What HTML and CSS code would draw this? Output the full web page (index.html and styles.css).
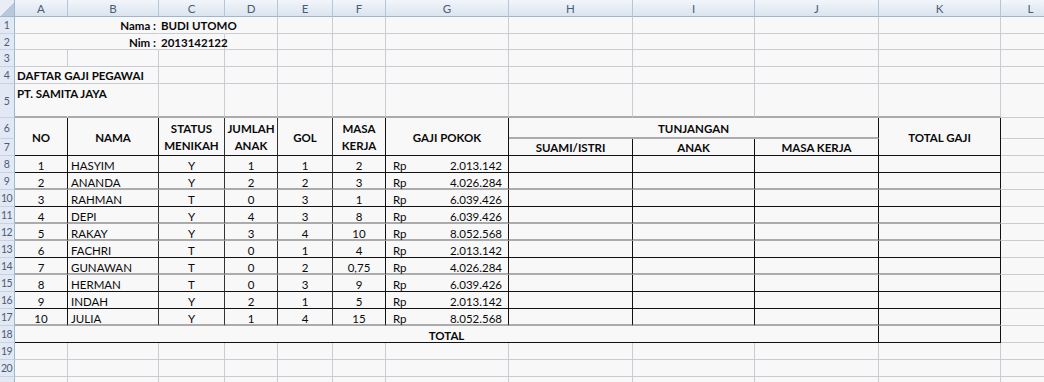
FILE: index.html
```html
<!DOCTYPE html>
<html>
<head>
<meta charset="utf-8">
<link rel="stylesheet" href="styles.css">
</head>
<body>
<div class="sheet">
  <div class="row">
    <div class="corner"></div>
    <div class="ch">A</div><div class="ch">B</div><div class="ch">C</div><div class="ch">D</div><div class="ch">E</div><div class="ch">F</div><div class="ch">G</div><div class="ch">H</div><div class="ch">I</div><div class="ch">J</div><div class="ch">K</div><div class="ch">L</div>
  </div>
  <div class="row">
    <div class="rh">1</div>
    <div class="c s2 nr r b">Nama :</div><div class="c nr b">BUDI UTOMO</div><div class="c"></div><div class="c"></div><div class="c"></div><div class="c"></div><div class="c"></div><div class="c"></div><div class="c"></div><div class="c"></div><div class="c"></div>
  </div>
  <div class="row">
    <div class="rh">2</div>
    <div class="c s2 nr r b">Nim :</div><div class="c b">2013142122</div><div class="c"></div><div class="c"></div><div class="c"></div><div class="c"></div><div class="c"></div><div class="c"></div><div class="c"></div><div class="c"></div><div class="c"></div>
  </div>
  <div class="row">
    <div class="rh">3</div>
    <div class="c"></div><div class="c"></div><div class="c"></div><div class="c"></div><div class="c"></div><div class="c"></div><div class="c"></div><div class="c"></div><div class="c"></div><div class="c"></div><div class="c"></div><div class="c"></div>
  </div>
  <div class="row">
    <div class="rh">4</div>
    <div class="c nr b">DAFTAR GAJI PEGAWAI</div><div class="c"></div><div class="c"></div><div class="c"></div><div class="c"></div><div class="c"></div><div class="c"></div><div class="c"></div><div class="c"></div><div class="c"></div><div class="c"></div><div class="c"></div>
  </div>
  <div class="row top">
    <div class="rh">5</div>
    <div class="c tb nr b up">PT. SAMITA JAYA</div><div class="c tb"></div><div class="c tb"></div><div class="c tb"></div><div class="c tb"></div><div class="c tb"></div><div class="c tb"></div><div class="c tb"></div><div class="c tb"></div><div class="c tb"></div><div class="c tb"></div><div class="c"></div>
  </div>
  <div class="row hd">
    <div class="rh">6</div>
    <div class="c t v2 ctr">NO</div>
    <div class="c t v2 ctr">NAMA</div>
    <div class="c t v2 ctr dk two">STATUS<br>MENIKAH</div>
    <div class="c t v2 ctr dk two">JUMLAH<br>ANAK</div>
    <div class="c t v2 ctr dk">GOL</div>
    <div class="c t v2 ctr two">MASA<br>KERJA</div>
    <div class="c t v2 ctr">GAJI POKOK</div>
    <div class="c t s3 ctr gb">TUNJANGAN</div>
    <div class="c t v2 ctr">TOTAL GAJI</div>
    <div class="c"></div>
  </div>
  <div class="row hd">
    <div class="rh">7</div>
    <div class="c t ctr">SUAMI/ISTRI</div>
    <div class="c t ctr">ANAK</div>
    <div class="c t ctr">MASA KERJA</div>
    <div class="c"></div>
  </div>

  <div class="row data">
    <div class="rh">8</div>
    <div class="c t ctr">1</div><div class="c t dk nm">HASYIM</div><div class="c t dk ctr">Y</div><div class="c t dk ctr">1</div><div class="c t dk ctr">1</div><div class="c t ctr">2</div>
    <div class="c t rp"><span>Rp</span><span>2.013.142</span></div>
    <div class="c t"></div><div class="c t"></div><div class="c t"></div><div class="c t"></div><div class="c"></div>
  </div>
  <div class="row data gry">
    <div class="rh">9</div>
    <div class="c t ctr">2</div><div class="c t dk nm">ANANDA</div><div class="c t dk ctr">Y</div><div class="c t dk ctr">2</div><div class="c t dk ctr">2</div><div class="c t ctr">3</div>
    <div class="c t rp"><span>Rp</span><span>4.026.284</span></div>
    <div class="c t"></div><div class="c t"></div><div class="c t"></div><div class="c t"></div><div class="c"></div>
  </div>
  <div class="row data">
    <div class="rh">10</div>
    <div class="c t ctr">3</div><div class="c t dk nm">RAHMAN</div><div class="c t dk ctr">T</div><div class="c t dk ctr">0</div><div class="c t dk ctr">3</div><div class="c t ctr">1</div>
    <div class="c t rp"><span>Rp</span><span>6.039.426</span></div>
    <div class="c t"></div><div class="c t"></div><div class="c t"></div><div class="c t"></div><div class="c"></div>
  </div>
  <div class="row data gry">
    <div class="rh">11</div>
    <div class="c t ctr">4</div><div class="c t dk nm">DEPI</div><div class="c t dk ctr">Y</div><div class="c t dk ctr">4</div><div class="c t dk ctr">3</div><div class="c t ctr">8</div>
    <div class="c t rp"><span>Rp</span><span>6.039.426</span></div>
    <div class="c t"></div><div class="c t"></div><div class="c t"></div><div class="c t"></div><div class="c"></div>
  </div>
  <div class="row data gry">
    <div class="rh">12</div>
    <div class="c t ctr">5</div><div class="c t dk nm">RAKAY</div><div class="c t dk ctr">Y</div><div class="c t dk ctr">3</div><div class="c t dk ctr">4</div><div class="c t ctr">10</div>
    <div class="c t rp"><span>Rp</span><span>8.052.568</span></div>
    <div class="c t"></div><div class="c t"></div><div class="c t"></div><div class="c t"></div><div class="c"></div>
  </div>
  <div class="row data">
    <div class="rh">13</div>
    <div class="c t ctr">6</div><div class="c t dk nm">FACHRI</div><div class="c t dk ctr">T</div><div class="c t dk ctr">0</div><div class="c t dk ctr">1</div><div class="c t ctr">4</div>
    <div class="c t rp"><span>Rp</span><span>2.013.142</span></div>
    <div class="c t"></div><div class="c t"></div><div class="c t"></div><div class="c t"></div><div class="c"></div>
  </div>
  <div class="row data gry">
    <div class="rh">14</div>
    <div class="c t ctr">7</div><div class="c t dk nm">GUNAWAN</div><div class="c t dk ctr">T</div><div class="c t dk ctr">0</div><div class="c t dk ctr">2</div><div class="c t ctr">0,75</div>
    <div class="c t rp"><span>Rp</span><span>4.026.284</span></div>
    <div class="c t"></div><div class="c t"></div><div class="c t"></div><div class="c t"></div><div class="c"></div>
  </div>
  <div class="row data">
    <div class="rh">15</div>
    <div class="c t ctr">8</div><div class="c t dk nm">HERMAN</div><div class="c t dk ctr">T</div><div class="c t dk ctr">0</div><div class="c t dk ctr">3</div><div class="c t ctr">9</div>
    <div class="c t rp"><span>Rp</span><span>6.039.426</span></div>
    <div class="c t"></div><div class="c t"></div><div class="c t"></div><div class="c t"></div><div class="c"></div>
  </div>
  <div class="row data">
    <div class="rh">16</div>
    <div class="c t ctr">9</div><div class="c t dk nm">INDAH</div><div class="c t dk ctr">Y</div><div class="c t dk ctr">2</div><div class="c t dk ctr">1</div><div class="c t ctr">5</div>
    <div class="c t rp"><span>Rp</span><span>2.013.142</span></div>
    <div class="c t"></div><div class="c t"></div><div class="c t"></div><div class="c t"></div><div class="c"></div>
  </div>
  <div class="row data gry">
    <div class="rh">17</div>
    <div class="c t ctr">10</div><div class="c t dk nm">JULIA</div><div class="c t dk ctr">Y</div><div class="c t dk ctr">1</div><div class="c t dk ctr">4</div><div class="c t ctr">15</div>
    <div class="c t rp"><span>Rp</span><span>8.052.568</span></div>
    <div class="c t"></div><div class="c t"></div><div class="c t"></div><div class="c t"></div><div class="c"></div>
  </div>
  <div class="row data">
    <div class="rh">18</div>
    <div class="c t s10 ctr b">TOTAL</div><div class="c t"></div><div class="c"></div>
  </div>
  <div class="row">
    <div class="rh">19</div>
    <div class="c"></div><div class="c"></div><div class="c"></div><div class="c"></div><div class="c"></div><div class="c"></div><div class="c"></div><div class="c"></div><div class="c"></div><div class="c"></div><div class="c"></div><div class="c"></div>
  </div>
  <div class="row">
    <div class="rh">20</div>
    <div class="c"></div><div class="c"></div><div class="c"></div><div class="c"></div><div class="c"></div><div class="c"></div><div class="c"></div><div class="c"></div><div class="c"></div><div class="c"></div><div class="c"></div><div class="c"></div>
  </div>
  <div class="row">
    <div class="rh"></div>
    <div class="c"></div><div class="c"></div><div class="c"></div><div class="c"></div><div class="c"></div><div class="c"></div><div class="c"></div><div class="c"></div><div class="c"></div><div class="c"></div><div class="c"></div><div class="c"></div>
  </div>
</div>
</body>
</html>
```

FILE: styles.css
```css
* { box-sizing: border-box; }
html, body {
  margin: 0;
  padding: 0;
  width: 1044px;
  height: 382px;
  overflow: hidden;
  background: #f8f8f8;
}
.sheet {
  display: grid;
  grid-template-columns: 15px 53px 91px 66px 53px 55px 53px 123px 124px 122px 124px 122px 60px;
  grid-template-rows: 17px 17px 16px 17px 17px 34px 21px 17px repeat(14, 17px);
  width: 1061px;
  background: #f8f8f8;
  font-family: Lato, "Open Sans", sans-serif;
  font-size: 11.5px;
  color: #0a0a0a;
}
.row { display: contents; }

.corner {
  border-right: 1px solid #9eb6ce;
  border-bottom: 1px solid #9eb6ce;
  background: linear-gradient(135deg, #e9eef5 0%, #e9eef5 55%, #b9c9dc 56%, #b9c9dc 100%);
}
.ch {
  display: flex;
  align-items: center;
  justify-content: center;
  background: linear-gradient(#f2f5fa, #dbe4ef);
  border-right: 1px solid #b6c6d9;
  border-bottom: 1px solid #9eb6ce;
  color: #4b5c76;
  font-size: 11.5px;
}
.rh {
  grid-column: 1;
  display: flex;
  align-items: center;
  justify-content: center;
  padding: 0 1px 0 0;
  background: #e2e9f4;
  border-right: 1px solid #9eb6ce;
  border-bottom: 1px solid #c5d3e3;
  color: #4b5c76;
  font-size: 10.5px;
  letter-spacing: -0.6px;
  white-space: nowrap;
  overflow: visible;
}

.c {
  display: flex;
  align-items: center;
  padding: 1px 2px 0 2px;
  border-right: 1px solid #c9cdd3;
  border-bottom: 1px solid #c9cdd3;
  white-space: nowrap;
  overflow: visible;
  min-width: 0;
}
.s2 { grid-column: span 2; }
.s3 { grid-column: span 3; }
.s10 { grid-column: span 10; }
.v2 { grid-row: span 2; }
.nr { border-right-color: transparent; }
.r { justify-content: flex-end; }
.ctr { justify-content: center; text-align: center; }
.b { font-weight: 700; }
.up { align-items: flex-start; padding-top: 3px; }

/* table top edge */
.c.tb { border-bottom: 2px solid #ababab; }
.c.tb.nr { border-right-color: transparent; }

/* table borders */
.c.t { border-right-color: #111; border-bottom: 1px solid #111; }
.c.t.nr { border-right-color: transparent; }
.c.t.dk { border-right-color: #333; }
.gry > .c.t { border-bottom: 2px solid #ababab; }
.c.t.gb { border-bottom: 2px solid #ababab; }

.hd > .c.t { font-weight: 700; }
.two { line-height: 17px; }

.data > .c { padding-top: 3px; }
.nm { padding-left: 3px; }
.rp {
  justify-content: space-between;
  padding-left: 7px;
  padding-right: 6px;
}
```
